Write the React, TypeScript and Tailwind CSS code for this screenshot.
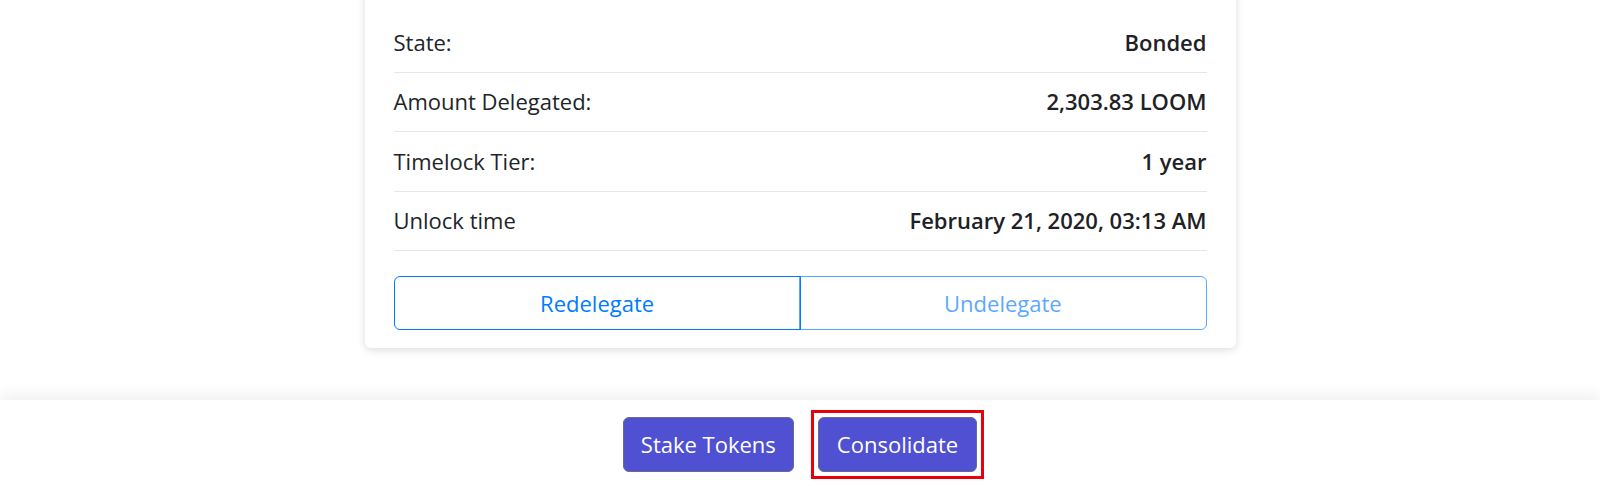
import React from "react";

const rows = [
  { label: "State:", value: "Bonded" },
  { label: "Amount Delegated:", value: "2,303.83 LOOM" },
  { label: "Timelock Tier:", value: "1 year" },
  { label: "Unlock time", value: "February 21, 2020, 03:13 AM" },
];

export default function App() {
  return (
    <main
      className="h-[489px] overflow-hidden bg-white text-[#212529] flex flex-col"
      style={{ fontFamily: '"Open Sans", "Noto Sans", sans-serif' }}
    >
      <section className="flex-1 flex justify-center">
        {/* Delegation card */}
        <div className="w-[871px] mt-[-17px] self-start bg-white rounded-[6px] shadow-[0_2px_8px_rgba(0,0,0,0.14)] px-[29px] pt-[30px] pb-[18px]">
          {rows.map((r) => (
            <div
              key={r.label}
              className="flex items-center justify-between py-[11.75px] leading-[35px] text-[22px] border-b-[1.5px] border-[#e6e6e6]"
            >
              <span>{r.label}</span>
              <span className="font-semibold text-[#1e2125]">{r.value}</span>
            </div>
          ))}

          <div className="flex mt-[25px]">
            <button className="relative z-10 flex-1 h-[54px] flex items-center justify-center border-[1.5px] border-[#007bff] rounded-l-[6px] text-[22px] text-[#007bff]">
              Redelegate
            </button>
            <button
              disabled
              className="flex-1 h-[54px] -ml-[1.5px] flex items-center justify-center border-[1.5px] border-[#007bff] rounded-r-[6px] text-[22px] text-[#007bff] opacity-65"
            >
              Undelegate
            </button>
          </div>
        </div>
      </section>

      {/* Bottom action bar */}
      <footer className="h-[89px] bg-white shadow-[0_-6px_14px_rgba(0,0,0,0.06)] flex items-center justify-center gap-6">
        <button className="h-[55px] px-[17px] rounded-[6px] bg-[#5050d2] border-[1.5px] border-[#6b6b85] text-white text-[22px]">
          Stake Tokens
        </button>
        <div className="relative">
          <button className="h-[55px] px-[18px] rounded-[6px] bg-[#5050d2] border-[1.5px] border-[#6b6b85] text-white text-[22px] block">
            Consolidate
          </button>
          {/* highlight annotation */}
          <div className="absolute -inset-[7px] border-[3px] border-[#e8000b] pointer-events-none" />
        </div>
      </footer>
    </main>
  );
}
